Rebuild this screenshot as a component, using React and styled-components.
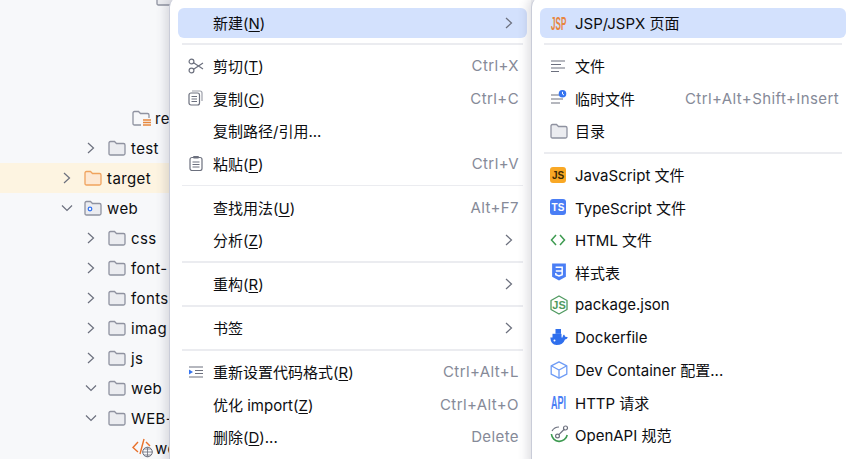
import React from 'react';
import styled, { createGlobalStyle } from 'styled-components';

const GlobalStyle = createGlobalStyle`
  html, body {
    margin: 0;
    padding: 0;
    background: #f7f8fa;
  }
`;

const font = `Inter, "Noto Sans CJK SC", sans-serif`;

const Screen = styled.div`
  display: flex;
  width: 847px;
  height: 459px;
  overflow: hidden;
  background: #f7f8fa;
  font-family: ${font};
  font-size: 15px;
  color: #0c0d10;
`;

const TreePanel = styled.div`
  flex: 0 0 169px;
  margin-top: -17px;
  min-width: 0;
  letter-spacing: 0.4px;
`;

const TreeRow = styled.div`
  display: flex;
  align-items: center;
  height: 30px;
  padding-left: ${({ $level }) => 61 + $level * 24}px;
  background: ${({ $active }) => ($active ? '#fdf4e1' : 'transparent')};
  white-space: nowrap;
`;

const ChevronSlot = styled.div`
  flex: 0 0 23px;
  display: flex;
  align-items: center;
`;

const TreeIcon = styled.div`
  flex: 0 0 23px;
  display: flex;
  align-items: center;
`;

const Menu = styled.div`
  position: relative;
  flex: 0 0 ${({ $width }) => $width}px;
  box-sizing: border-box;
  height: 470px;
  margin-top: -3px;
  padding: 9.75px ${({ $inset }) => $inset}px 0 8px;
  background: #fff;
  border-left: 1px solid #c9ccd8;
  border-top-left-radius: 10px;
  box-shadow: -4px 0 10px rgba(60, 65, 85, 0.16);
  z-index: ${({ $z }) => $z};
`;

const MenuRow = styled.div`
  display: flex;
  align-items: center;
  box-sizing: border-box;
  height: ${({ $selected }) => ($selected ? 30 : 32.5)}px;
  margin: ${({ $selected }) => ($selected ? '1.25px 0 2.25px' : '0')};
  padding: 0 ${({ $pad }) => $pad}px ${({ $selected }) => ($selected ? 1 : 0)}px 10px;
  border-radius: 6px;
  background: ${({ $selected }) => ($selected ? '#d3e1fd' : 'transparent')};
  white-space: nowrap;
`;

const IconSlot = styled.div`
  flex: 0 0 25px;
  display: flex;
  align-items: center;
  height: 16px;
`;

const Label = styled.span`
  flex: 1;
`;

const Mnemonic = styled.span`
  text-decoration: underline;
  text-underline-offset: 2px;
`;

const Shortcut = styled.span`
  color: #868a98;
  letter-spacing: 0.4px;
`;

const ArrowSlot = styled.div`
  display: flex;
  margin-right: 4px;
`;

const Divider = styled.div`
  height: 1.5px;
  margin: 5px 4px;
  background: #ebecf0;
`;

const Svg = ({ children, size = 16, ...rest }) => (
  <svg width={size} height={size} viewBox="0 0 16 16" fill="none" {...rest}>
    {children}
  </svg>
);

const Chevron = ({ down, color = '#6c707e' }) => (
  <Svg size={12} viewBox="0 0 12 12">
    <path
      d={down ? 'M1 3.5 L6 8.5 L11 3.5' : 'M3 1 L8.5 6 L3 11'}
      stroke={color}
      strokeWidth="1.2"
    />
  </Svg>
);

const Folder = ({ stroke = '#8f92a0', fill = '#ebecf0', size = 18, dot }) => (
  <svg width={size} height={size} viewBox="0 0 18 18" fill="none">
    <path
      d="M1 4 Q1 2.5 2.5 2.5 H6.5 L8.5 4.5 H15.5 Q17 4.5 17 6 V14.5 Q17 16 15.5 16 H2.5 Q1 16 1 14.5 Z"
      fill={fill}
      stroke={stroke}
      strokeWidth="1.3"
    />
    {dot && <circle cx="6" cy="10" r="1.8" stroke="#3574f0" strokeWidth="1.3" fill="#fff" />}
  </svg>
);

const ResourceFolder = () => (
  <svg width="20" height="18" viewBox="0 0 20 18" fill="none">
    <path
      d="M9 16 H2.5 Q1 16 1 14.5 V4 Q1 2.5 2.5 2.5 H6.5 L8.5 4.5 H15.5 Q17 4.5 17 6 V9"
      fill="#f7f8fa"
      stroke="#8f92a0"
      strokeWidth="1.3"
    />
    <path d="M11 11 H19 M11 13.5 H19 M11 16 H19" stroke="#e8873c" strokeWidth="1.4" />
  </svg>
);

const WebXml = () => (
  <svg width="22" height="20" viewBox="0 0 22 20" fill="none">
    <path d="M6 4 L1 9.5 L6 14" stroke="#e8712c" strokeWidth="1.4" />
    <path d="M12 1 L8 16" stroke="#e8712c" strokeWidth="1.4" />
    <path d="M14 4 L18 8" stroke="#e8712c" strokeWidth="1.4" />
    <circle cx="15.5" cy="14" r="4.8" fill="#f7f8fa" stroke="#6c707e" />
    <path d="M10.7 14 H20.3 M15.5 9.2 V18.8 M12 11 H19 M12 17 H19" stroke="#6c707e" strokeWidth="0.8" />
  </svg>
);

const Scissors = () => (
  <Svg>
    <circle cx="3.5" cy="3.5" r="2.4" stroke="#6c707e" strokeWidth="1.2" />
    <circle cx="3.5" cy="12.5" r="2.4" stroke="#6c707e" strokeWidth="1.2" />
    <path d="M5.6 4.8 L15 11 M5.6 11.2 L15 5" stroke="#6c707e" strokeWidth="1.2" />
  </Svg>
);

const Copy = () => (
  <Svg>
    <rect x="1" y="3" width="10.5" height="12" rx="2" stroke="#6c707e" strokeWidth="1.2" fill="#fff" />
    <path d="M4 1 H12 Q14 1 14 3 V11" stroke="#9da0aa" strokeWidth="1.2" />
    <path d="M3.5 6.5 H9 M3.5 9 H9 M3.5 11.5 H9" stroke="#6c707e" />
  </Svg>
);

const Paste = () => (
  <Svg>
    <rect x="2" y="2.5" width="12" height="13" rx="2" stroke="#6c707e" strokeWidth="1.2" />
    <rect x="5" y="1" width="6" height="2.5" rx="1" fill="#6c707e" />
    <path d="M4.5 7 H11.5 M4.5 9.5 H11.5 M4.5 12 H11.5" stroke="#6c707e" />
  </Svg>
);

const Reformat = () => (
  <Svg>
    <path d="M1 3 H15 M7 6.5 H15 M7 9.5 H15 M1 13 H15" stroke="#6c707e" strokeWidth="1.2" />
    <path d="M1 5.5 L5 8 L1 10.5 Z" fill="#3574f0" />
  </Svg>
);

const FileLines = () => (
  <Svg>
    <path d="M1 3 H15 M1 6.5 H11 M1 10 H15 M1 13.5 H9" stroke="#6c707e" strokeWidth="1.2" />
  </Svg>
);

const Scratch = () => (
  <Svg size={17} viewBox="0 0 17 17">
    <path d="M1 5 H9 M1 9 H13 M1 13 H10" stroke="#6c707e" strokeWidth="1.2" />
    <circle cx="12.5" cy="3.8" r="3.8" fill="#3574f0" />
    <path d="M12.5 1.8 V4 L14 5" stroke="#fff" />
  </Svg>
);

const Badge = ({ bg, color, text }) => (
  <Svg>
    <rect x="0" y="0" width="16" height="16" rx="3" fill={bg} />
    <text
      x="8"
      y="12"
      textAnchor="middle"
      fontFamily="Liberation Sans, sans-serif"
      fontWeight="700"
      fontSize="10"
      fill={color}
    >
      {text}
    </text>
  </Svg>
);

// tall condensed letters, squeezed with a transform so the text box stays inside the svg
const NarrowMark = ({ text, color, squeeze }) => (
  <svg width="17" height="18" viewBox="0 0 17 18">
    <text
      transform={`translate(1 15.5) scale(${squeeze} 1)`}
      fontFamily="Liberation Sans, sans-serif"
      fontWeight="700"
      fontSize="18"
      fill={color}
    >
      {text}
    </text>
  </svg>
);

const HtmlIcon = () => (
  <Svg>
    <path d="M6 3 L1.5 8 L6 13 M10 3 L14.5 8 L10 13" stroke="#3d9a50" strokeWidth="1.5" />
  </Svg>
);

const CssIcon = () => (
  <Svg size={18} viewBox="0 0 16 17">
    <path d="M1.5 0.5 H14.5 V13 L8 16.5 L1.5 13 Z" fill="#4a7ef5" />
    <path d="M4.8 4 H11 V11 L8 12.3 L5 11 V9.5 M5 7.5 H10.8" stroke="#fff" strokeWidth="1.4" />
  </Svg>
);

const NodeIcon = () => (
  <svg width="18" height="20" viewBox="0 0 18 20" fill="none">
    <path d="M9 1 L17 5.5 V14.5 L9 19 L1 14.5 V5.5 Z" stroke="#4f9a60" strokeWidth="1.3" strokeLinejoin="round" />
    <text x="9" y="14" textAnchor="middle" fontFamily="Liberation Sans, sans-serif" fontSize="11" fontWeight="700" fill="#4f9a60">
      JS
    </text>
  </svg>
);

const DockerIcon = () => (
  <svg width="18" height="16" viewBox="0 0 18 16" fill="none">
    <rect x="5.5" y="0" width="5.5" height="4.8" fill="#2f6fed" />
    <rect x="2.5" y="4.8" width="9" height="4.2" fill="#2f6fed" />
    <path d="M0.3 8.6 H12.5 Q12.8 5.6 14 5.4 Q15 6.6 15.2 7.8 Q16.6 7.6 17.9 8.4 Q16.6 10.4 15 10.5 Q13 16 6.5 16 Q0.8 16 0.3 8.6 Z" fill="#2f6fed" />
    <circle cx="4.5" cy="11.6" r="1" fill="#fff" />
  </svg>
);

const CubeIcon = () => (
  <svg width="18" height="18" viewBox="0 0 18 18" fill="none">
    <path d="M9 0.8 L16.8 4.8 V13.2 L9 17.2 L1.2 13.2 V4.8 Z" stroke="#6f9cf5" strokeWidth="1.3" strokeLinejoin="round" />
    <path d="M1.2 4.8 L9 9 L16.8 4.8 M9 9 V17.2" stroke="#6f9cf5" strokeWidth="1.3" />
  </svg>
);

const OpenApiIcon = () => (
  <svg width="19" height="19" viewBox="0 0 19 19" fill="none">
    <path d="M1.4 9 A8 8 0 0 0 17.2 10" stroke="#3d9a50" strokeWidth="1.6" />
    <path d="M2 6 A8 8 0 0 1 9 2" stroke="#6c707e" strokeWidth="1.2" />
    <circle cx="7.5" cy="11" r="1.9" stroke="#6c707e" strokeWidth="1.2" />
    <circle cx="15.5" cy="3" r="2" stroke="#6c707e" strokeWidth="1.2" />
    <path d="M8.9 9.6 L14 4.5" stroke="#6c707e" strokeWidth="1.2" />
  </svg>
);

const treeRows = [
  { level: 3, icon: <Folder />, label: '' },
  { level: 3, label: '' },
  { level: 3, label: '' },
  { level: 3, label: '' },
  { level: 2, leaf: true, icon: <ResourceFolder />, label: 're' },
  { level: 1, icon: <Folder />, label: 'test' },
  { level: 0, active: true, icon: <Folder stroke="#f0a35e" fill="#fde8d3" />, label: 'target' },
  { level: 0, open: true, icon: <Folder dot />, label: 'web' },
  { level: 1, icon: <Folder />, label: 'css' },
  { level: 1, icon: <Folder />, label: 'font-' },
  { level: 1, icon: <Folder />, label: 'fonts' },
  { level: 1, icon: <Folder />, label: 'imag' },
  { level: 1, icon: <Folder />, label: 'js' },
  { level: 1, open: true, icon: <Folder />, label: 'web' },
  { level: 1, open: true, icon: <Folder />, label: 'WEB-' },
  { level: 2, leaf: true, icon: <WebXml />, label: 'we' },
];

const Key = ({ children }) => <Mnemonic>{children}</Mnemonic>;

const mainMenu = [
  { label: <>新建(<Key>N</Key>)</>, arrow: true, selected: true },
  { divider: true },
  { icon: <Scissors />, label: <>剪切(<Key>T</Key>)</>, shortcut: 'Ctrl+X' },
  { icon: <Copy />, label: <>复制(<Key>C</Key>)</>, shortcut: 'Ctrl+C' },
  { label: '复制路径/引用...' },
  { icon: <Paste />, label: <>粘贴(<Key>P</Key>)</>, shortcut: 'Ctrl+V' },
  { divider: true },
  { label: <>查找用法(<Key>U</Key>)</>, shortcut: 'Alt+F7' },
  { label: <>分析(<Key>Z</Key>)</>, arrow: true },
  { divider: true },
  { label: <>重构(<Key>R</Key>)</>, arrow: true },
  { divider: true },
  { label: '书签', arrow: true },
  { divider: true },
  { icon: <Reformat />, label: <>重新设置代码格式(<Key>R</Key>)</>, shortcut: 'Ctrl+Alt+L' },
  { label: <>优化 import(<Key>Z</Key>)</>, shortcut: 'Ctrl+Alt+O' },
  { label: <>删除(<Key>D</Key>)...</>, shortcut: 'Delete' },
];

const subMenu = [
  { icon: <NarrowMark text="JSP" color="#e8853f" squeeze={0.45} />, label: 'JSP/JSPX 页面', selected: true },
  { divider: true },
  { icon: <FileLines />, label: '文件' },
  { icon: <Scratch />, label: '临时文件', shortcut: 'Ctrl+Alt+Shift+Insert' },
  { icon: <Folder size={18} />, label: '目录' },
  { divider: true },
  { icon: <Badge bg="#f9a825" color="#3a2a06" text="JS" />, label: 'JavaScript 文件' },
  { icon: <Badge bg="#4a7ef5" color="#fff" text="TS" />, label: 'TypeScript 文件' },
  { icon: <HtmlIcon />, label: 'HTML 文件' },
  { icon: <CssIcon />, label: '样式表' },
  { icon: <NodeIcon />, label: 'package.json' },
  { icon: <DockerIcon />, label: 'Dockerfile' },
  { icon: <CubeIcon />, label: 'Dev Container 配置...' },
  { icon: <NarrowMark text="API" color="#4a7ef5" squeeze={0.5} />, label: 'HTTP 请求' },
  { icon: <OpenApiIcon />, label: 'OpenAPI 规范' },
];

const MenuList = ({ items, width, z, inset, pad }) => (
  <Menu $width={width} $z={z} $inset={inset}>
    {items.map((item, i) =>
      item.divider ? (
        <Divider key={i} />
      ) : (
        <MenuRow key={i} $selected={item.selected} $pad={pad}>
          <IconSlot>{item.icon}</IconSlot>
          <Label>{item.label}</Label>
          {item.shortcut && <Shortcut>{item.shortcut}</Shortcut>}
          {item.arrow && (
            <ArrowSlot>
              <Chevron />
            </ArrowSlot>
          )}
        </MenuRow>
      )
    )}
  </Menu>
);

export default function App() {
  return (
    <>
      <GlobalStyle />
      <Screen>
        <TreePanel>
          {treeRows.map((row, i) => (
            <TreeRow key={i} $level={row.level} $active={row.active}>
              <ChevronSlot>
                {!row.leaf && row.label && <Chevron down={row.open} />}
              </ChevronSlot>
              <TreeIcon>{row.icon}</TreeIcon>
              <span>{row.label}</span>
            </TreeRow>
          ))}
        </TreePanel>
        <MenuList items={mainMenu} width={362} z={1} inset={4} pad={8} />
        <MenuList items={subMenu} width={316} z={2} inset={1} pad={7} />
      </Screen>
    </>
  );
}
